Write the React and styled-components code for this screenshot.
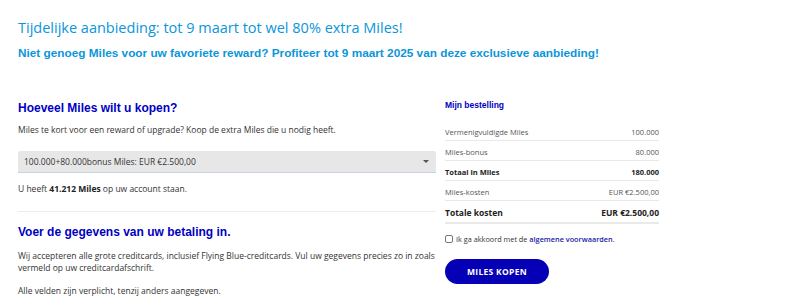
import React from 'react';
import styled, { createGlobalStyle } from 'styled-components';

const GlobalStyle = createGlobalStyle`
  body {
    margin: 0;
    background: #fff;
    font-family: "Open Sans", "Liberation Sans", sans-serif;
    color: #333;
  }
`;

const orderRows = [
  { label: 'Vermenigvuldigde Miles', value: '100.000' },
  { label: 'Miles-bonus', value: '80.000' },
  { label: 'Totaal in Miles', value: '180.000', strong: true },
  { label: 'Miles-kosten', value: 'EUR €2.500,00' },
];

const App = () => (
  <Page>
    <GlobalStyle />
    <Title>Tijdelijke aanbieding: tot 9 maart tot wel 80% extra Miles!</Title>
    <Subtitle>
      Niet genoeg Miles voor uw favoriete reward? Profiteer tot 9 maart 2025 van deze exclusieve aanbieding!
    </Subtitle>

    <Main>
      <LeftColumn>
        <Heading>Hoeveel Miles wilt u kopen?</Heading>
        <Text $top={9}>Miles te kort voor een reward of upgrade? Koop de extra Miles die u nodig heeft.</Text>
        <Select>
          <span>100.000+80.000bonus Miles: EUR €2.500,00</span>
          <Caret />
        </Select>
        <Text $top={10}>
          U heeft <b>41.212 Miles</b> op uw account staan.
        </Text>
        <Divider />
        <Heading $top={13}>Voer de gegevens van uw betaling in.</Heading>
        <Text $top={11}>
          Wij accepteren alle grote creditcards, inclusief Flying Blue-creditcards. Vul uw gegevens precies zo in zoals
          vermeld op uw creditcardafschrift.
        </Text>
        <Text $top={12}>Alle velden zijn verplicht, tenzij anders aangegeven.</Text>
      </LeftColumn>

      <RightColumn>
        <OrderTitle>Mijn bestelling</OrderTitle>
        {orderRows.map(row => (
          <OrderRow key={row.label} $strong={row.strong}>
            <span>{row.label}</span>
            <span>{row.value}</span>
          </OrderRow>
        ))}
        <TotalRow>
          <span>Totale kosten</span>
          <span>EUR €2.500,00</span>
        </TotalRow>
        <Agree>
          <Checkbox type="checkbox" />
          <span>
            Ik ga akkoord met de <Link href="#">algemene voorwaarden</Link>.
          </span>
        </Agree>
        <BuyButton type="button">MILES KOPEN</BuyButton>
      </RightColumn>
    </Main>
  </Page>
);

export default App;

const Page = styled.div`
  padding: 18px 18px 0;
  width: 800px;
  height: 305px;
  box-sizing: border-box;
  overflow: hidden;
`;

const Title = styled.h1`
  margin: 0;
  font-family: "Open Sans", sans-serif;
  font-weight: 400;
  font-size: 14.5px;
  line-height: 20px;
  color: #0a96d9;
`;

const Subtitle = styled.h2`
  margin: 7px 0 0;
  font-family: "Liberation Sans", Arial, sans-serif;
  font-weight: 700;
  font-size: 11.8px;
  line-height: 16px;
  color: #0a96d9;
`;

const Main = styled.div`
  display: flex;
  gap: 9px;
  margin-top: 34px;
`;

const LeftColumn = styled.div`
  width: 418px;
  padding-top: 6px;
`;

const RightColumn = styled.div`
  width: 214px;
  padding-top: 4px;
`;

const Heading = styled.h3`
  margin: ${p => p.$top || 0}px 0 0;
  font-family: "Liberation Sans", Arial, sans-serif;
  font-weight: 700;
  font-size: 12px;
  line-height: 14px;
  color: #0000c4;
`;

const Text = styled.p`
  margin: ${p => p.$top || 0}px 0 0;
  font-size: 8.5px;
  line-height: 11.6px;
  color: #333;

  b {
    font-weight: 700;
    color: #222;
  }
`;

const Select = styled.div`
  display: flex;
  align-items: center;
  justify-content: space-between;
  margin-top: 15px;
  height: 21px;
  padding: 0 7px 0 6px;
  background: #e7e7e7;
  border-bottom: 1px solid #c9d3de;
  border-radius: 2px 2px 0 0;
  font-size: 8.5px;
  color: #333;
`;

const Caret = styled.i`
  width: 0;
  height: 0;
  border-left: 3px solid transparent;
  border-right: 3px solid transparent;
  border-top: 3px solid #555;
`;

const Divider = styled.hr`
  margin: 17px 0 0;
  border: 0;
  border-top: 1px solid #ececec;
`;

const OrderTitle = styled.h4`
  margin: 0 0 10px;
  font-family: "Liberation Sans", Arial, sans-serif;
  font-weight: 700;
  font-size: 8.5px;
  line-height: 12px;
  color: #0000c4;
`;

const OrderRow = styled.div`
  display: flex;
  justify-content: space-between;
  padding: 5px 0 2px;
  line-height: 12px;
  font-size: 7.5px;
  font-weight: ${p => (p.$strong ? 700 : 400)};
  color: ${p => (p.$strong ? '#222' : '#555')};
  border-bottom: 1px solid #e9e9e9;
`;

const TotalRow = styled(OrderRow)`
  padding: 6px 0 3px;
  font-size: 8.5px;
  font-weight: 700;
  color: #222;
  border-bottom: 2px solid #e9e9e9;
`;

const Agree = styled.label`
  display: flex;
  align-items: center;
  gap: 3px;
  margin-top: 9px;
  line-height: 12px;
  font-size: 7.3px;
  color: #333;
`;

const Checkbox = styled.input`
  appearance: none;
  margin: 0;
  width: 8px;
  height: 8px;
  border: 1px solid #777;
  border-radius: 2px;
  background: #fff;
`;

const Link = styled.a`
  color: #1a1aa8;
  font-weight: 600;
  text-decoration: none;
`;

const BuyButton = styled.button`
  display: block;
  margin-top: 14px;
  width: 104px;
  height: 25px;
  border: 0;
  border-radius: 13px;
  background: #0500b5;
  color: #fff;
  font-family: "Open Sans", sans-serif;
  font-weight: 700;
  font-size: 8.5px;
  letter-spacing: 0.3px;
  cursor: pointer;
`;
